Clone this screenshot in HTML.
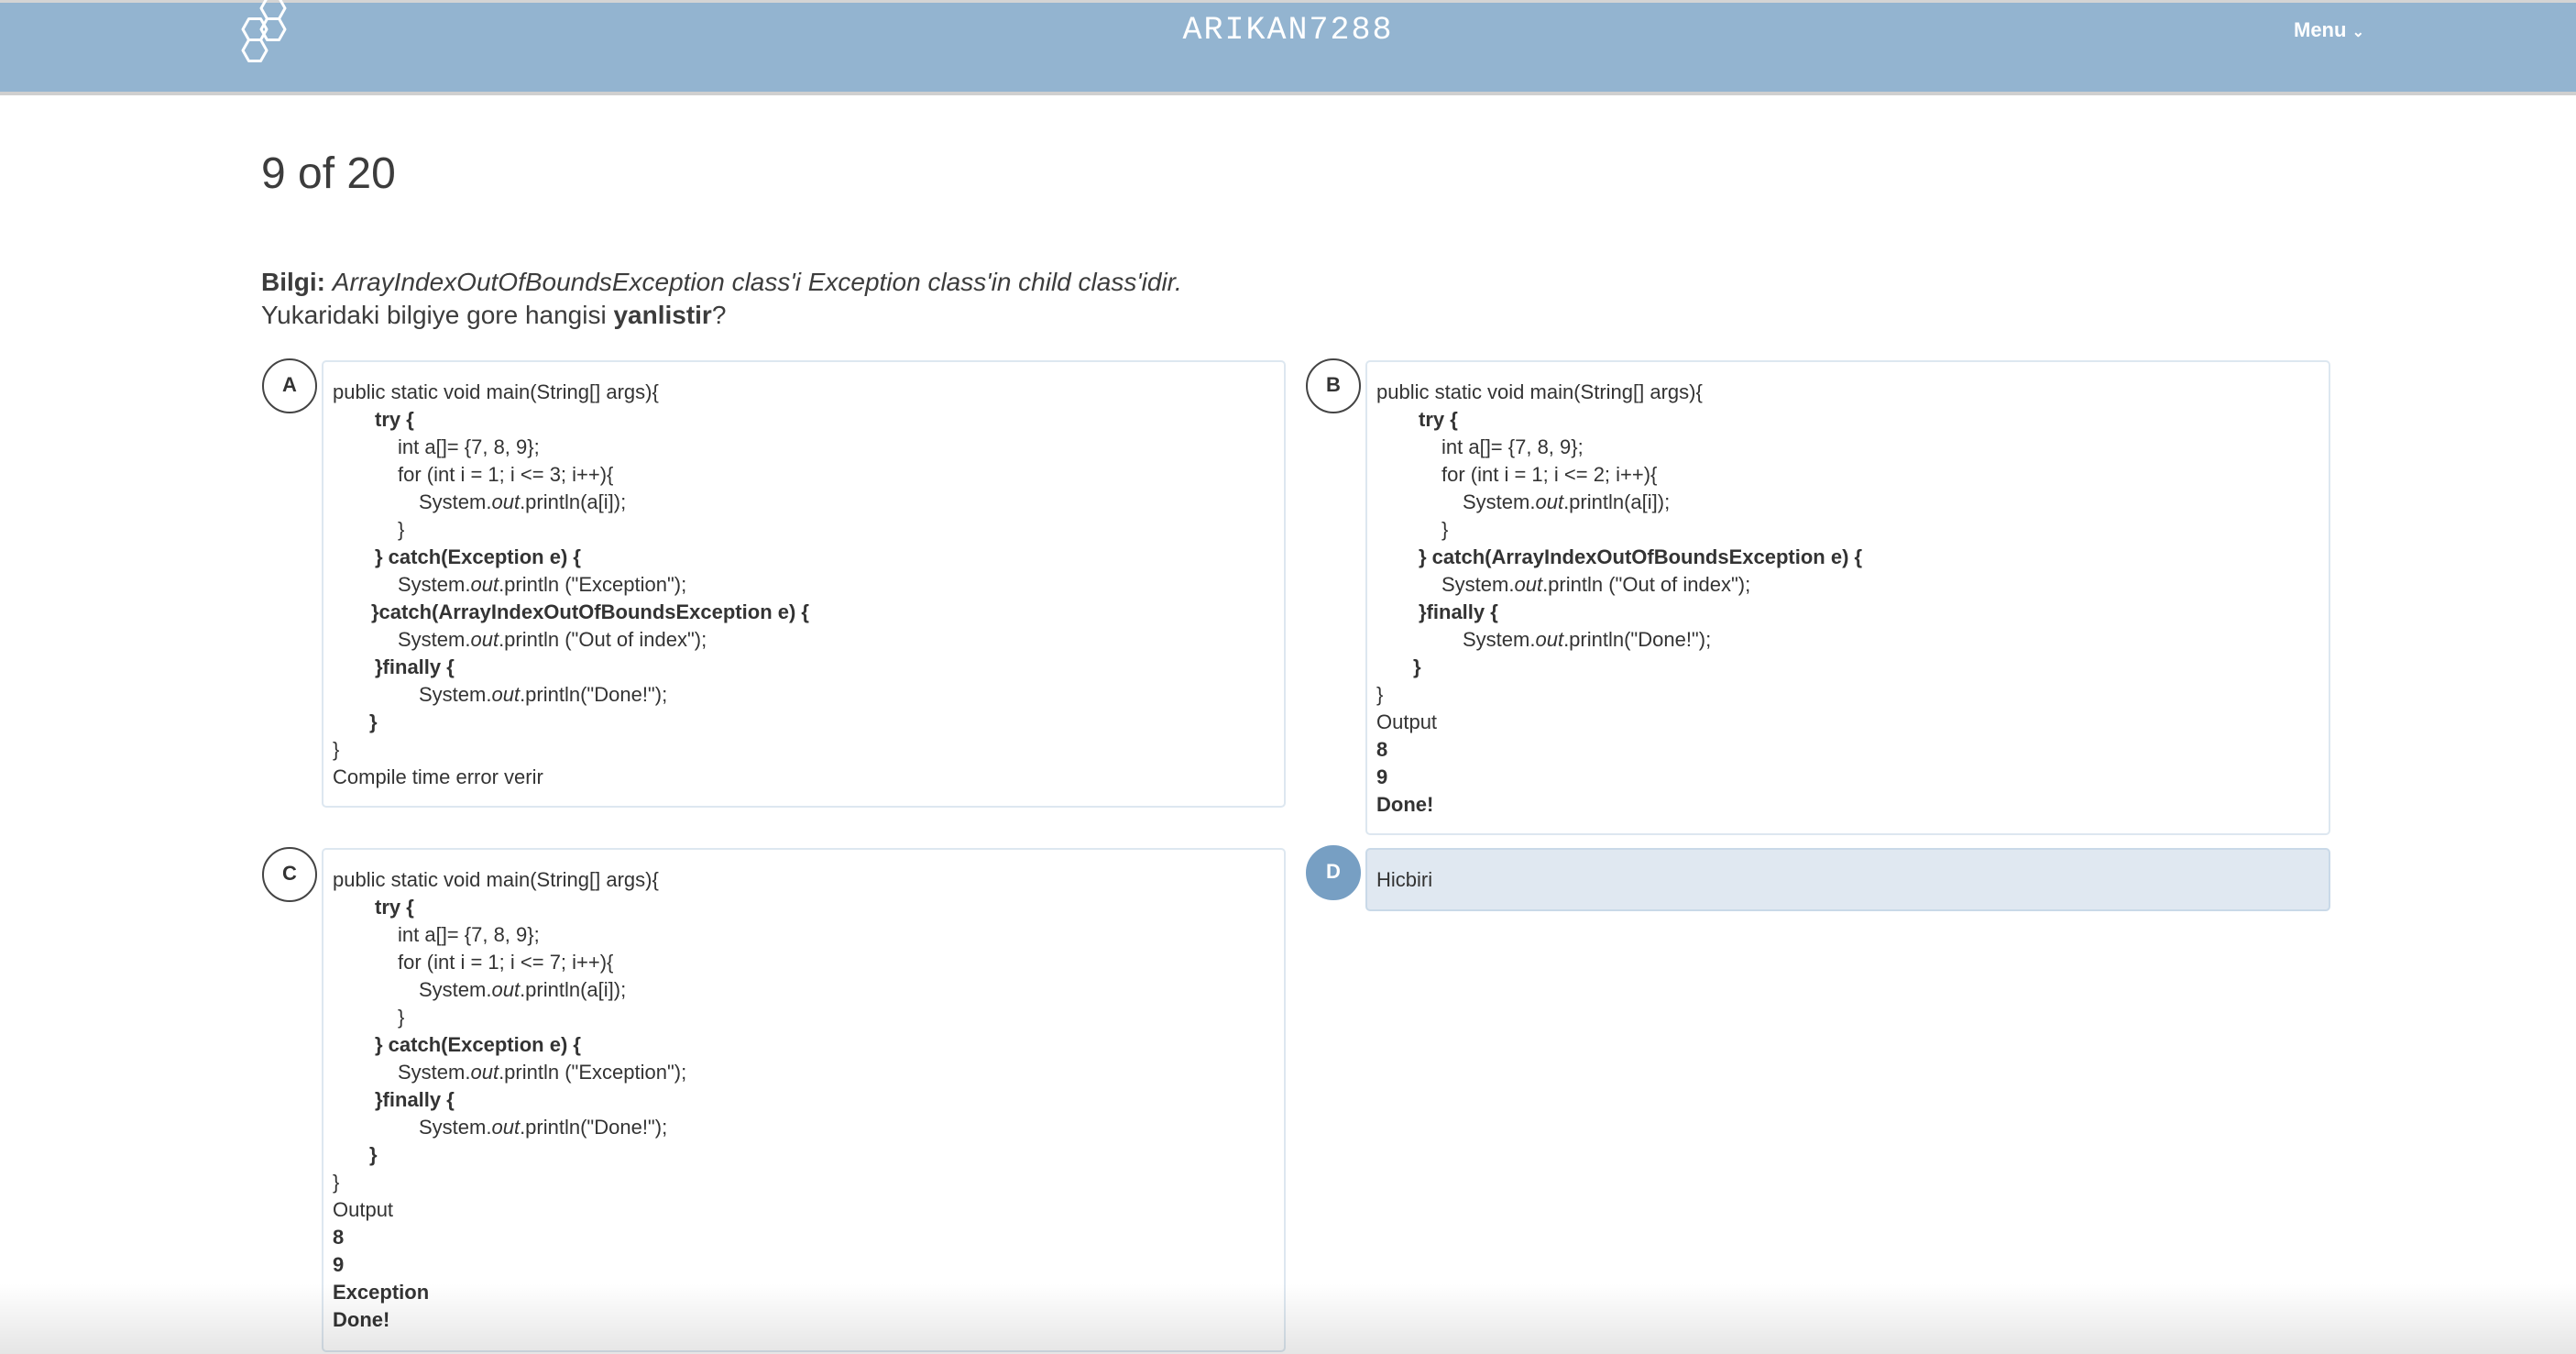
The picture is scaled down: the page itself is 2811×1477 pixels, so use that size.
<!DOCTYPE html>
<html><head><meta charset="utf-8"><style>
*{margin:0;padding:0;box-sizing:border-box}
body{width:2811px;height:1477px;overflow:hidden;background:#fff;font-family:"Liberation Sans",sans-serif;color:#3c3c3c;position:relative}
.hdr{position:absolute;left:0;top:0;width:2811px;height:104px;background:#93b4d0;border-top:3px solid #d4d4d4;border-bottom:4px solid #cfcfcf}
.title{position:absolute;left:0;width:2811px;top:10px;text-align:center;color:#fff;font-family:"Liberation Mono",monospace;font-size:35px;letter-spacing:2px}
.menu{position:absolute;left:2503px;top:17px;color:#fff;font-size:22px;font-weight:bold}
.h1{position:absolute;left:285px;top:162px;font-size:48px;color:#3c3c3c}
.q{position:absolute;left:285px;top:290px;font-size:28px;line-height:36px}
.circ{position:absolute;width:60px;height:60px;border:2px solid #444;border-radius:50%;text-align:center;line-height:54px;font-size:22px;font-weight:bold;color:#333;background:#fff}
.box{position:absolute;border:2px solid #dde7f0;border-radius:5px;background:#fff;padding:18px 0 0 10px;font-size:22px;line-height:30px;color:#333}
.box b{color:#333}
.i1{padding-left:46px}.i2{padding-left:71px}.i3{padding-left:94px}
.shade{position:absolute;left:0;top:1400px;width:2811px;height:77px;background:linear-gradient(to bottom,rgba(0,0,0,0),rgba(0,0,0,0.1))}
</style></head><body>
<div class="hdr">
<svg style="position:absolute;left:240px;top:-3px" width="90" height="70" viewBox="0 0 90 70" fill="none" stroke="#fff" stroke-width="3" stroke-linejoin="round">
<polygon points="71,9 64.5,20.5 51.5,20.5 45,9 51.5,-2.5 64.5,-2.5"/>
<polygon points="51,32 44.5,43.5 31.5,43.5 25,32 31.5,20.5 44.5,20.5"/>
<polygon points="71,32 64.5,43.5 51.5,43.5 45,32 51.5,20.5 64.5,20.5"/>
<polygon points="51,55 44.5,66.5 31.5,66.5 25,55 31.5,43.5 44.5,43.5"/>
</svg>
<div class="title">ARIKAN7288</div>
<div class="menu">Menu <span style="font-size:16px">&#8964;</span></div>
</div>
<div class="h1">9 of 20</div>
<div class="q"><b>Bilgi:</b> <i>ArrayIndexOutOfBoundsException class'i Exception class'in child class'idir.</i><br>Yukaridaki bilgiye gore hangisi <b>yanlistir</b>?</div>

<div class="circ" style="left:286px;top:391px">A</div>
<div class="box" style="left:351px;top:393px;width:1052px;height:488px">
<div>public static void main(String[] args){</div>
<div class="i1"><b>try {</b></div>
<div class="i2">int a[]= {7, 8, 9};</div>
<div class="i2">for (int i = 1; i &lt;= 3; i++){</div>
<div class="i3">System.<i>out</i>.println(a[i]);</div>
<div class="i2">}</div>
<div class="i1"><b>} catch(Exception e) {</b></div>
<div class="i2">System.<i>out</i>.println ("Exception");</div>
<div style="padding-left:42px"><b>}catch(ArrayIndexOutOfBoundsException e) {</b></div>
<div class="i2">System.<i>out</i>.println ("Out of index");</div>
<div class="i1"><b>}finally {</b></div>
<div class="i3">System.<i>out</i>.println("Done!");</div>
<div style="padding-left:40px"><b>}</b></div>
<div>}</div>
<div>Compile time error verir</div>
</div>

<div class="circ" style="left:1425px;top:391px">B</div>
<div class="box" style="left:1490px;top:393px;width:1053px;height:518px">
<div>public static void main(String[] args){</div>
<div class="i1"><b>try {</b></div>
<div class="i2">int a[]= {7, 8, 9};</div>
<div class="i2">for (int i = 1; i &lt;= 2; i++){</div>
<div class="i3">System.<i>out</i>.println(a[i]);</div>
<div class="i2">}</div>
<div class="i1"><b>} catch(ArrayIndexOutOfBoundsException e) {</b></div>
<div class="i2">System.<i>out</i>.println ("Out of index");</div>
<div class="i1"><b>}finally {</b></div>
<div class="i3">System.<i>out</i>.println("Done!");</div>
<div style="padding-left:40px"><b>}</b></div>
<div>}</div>
<div>Output</div>
<div><b>8</b></div>
<div><b>9</b></div>
<div><b>Done!</b></div>
</div>

<div class="circ" style="left:286px;top:924px">C</div>
<div class="box" style="left:351px;top:925px;width:1052px;height:550px">
<div>public static void main(String[] args){</div>
<div class="i1"><b>try {</b></div>
<div class="i2">int a[]= {7, 8, 9};</div>
<div class="i2">for (int i = 1; i &lt;= 7; i++){</div>
<div class="i3">System.<i>out</i>.println(a[i]);</div>
<div class="i2">}</div>
<div class="i1"><b>} catch(Exception e) {</b></div>
<div class="i2">System.<i>out</i>.println ("Exception");</div>
<div class="i1"><b>}finally {</b></div>
<div class="i3">System.<i>out</i>.println("Done!");</div>
<div style="padding-left:40px"><b>}</b></div>
<div>}</div>
<div>Output</div>
<div><b>8</b></div>
<div><b>9</b></div>
<div><b>Exception</b></div>
<div><b>Done!</b></div>
</div>

<div class="circ" style="left:1425px;top:922px;background:#779fc3;border-color:#779fc3;color:#fff">D</div>
<div class="box" style="left:1490px;top:925px;width:1053px;height:69px;background:#e0e8f1;border-color:#c9d9e8">Hicbiri</div>
<div class="shade"></div>
</body></html>
